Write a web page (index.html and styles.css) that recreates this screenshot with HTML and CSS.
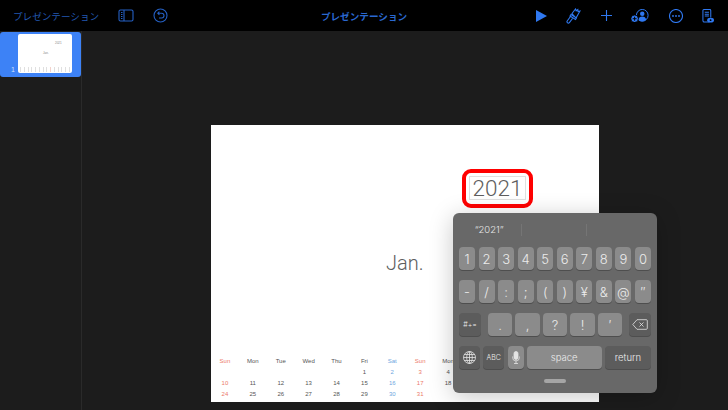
FILE: index.html
```html
<!DOCTYPE html>
<html lang="ja">

<head>
    <meta charset="UTF-8">
    <title>プレゼンテーション</title>
    <link rel="stylesheet" href="styles.css">
</head>

<body>
    <div class="topbar">
        <div class="top-left">
            <span class="back">プレゼンテーション</span>
            <svg class="icon dim" width="16" height="13" viewBox="0 0 16 13">
                <rect x="1" y="1" width="14" height="11" rx="1.500" />
                <path d="M6 1v11M3 3.500h1.500M3 5.500h1.500M3 7.500h1.500M3 9.500h1.500" />
            </svg>
            <svg class="icon dim" width="15" height="15" viewBox="0 0 15 15">
                <circle cx="7.500" cy="7.500" r="6.500" />
                <path d="M5 5.200h3.600a2.300 2.300 0 0 1 0 4.800H6M6.400 3.600 4.800 5.200l1.600 1.600" />
            </svg>
        </div>
        <div class="doc-title">プレゼンテーション</div>
        <div class="top-right">
            <svg class="icon" width="11" height="12" viewBox="0 0 11 12"><path class="fill" d="M0 0 11 6 0 12z" /></svg>
            <svg class="icon" width="15" height="16" viewBox="0 0 15 16">
                <path d="M6 5.500 9.500 1l.7 1.800L11.800 1.600 12 3.500l2-.5-4 7zM5 6.500l5.500 3.500-1 1.500L4 8zM4.500 8.500 1.200 13a1.400 1.400 0 0 0 2.200 1.700L6.500 10.500" />
            </svg>
            <svg class="icon" width="11" height="11" viewBox="0 0 11 11"><path d="M5.500 0v11M0 5.500h11" /></svg>
            <svg class="icon" width="18" height="13.500" viewBox="0 0 20 15">
                <circle cx="12.500" cy="7" r="6.500" />
                <circle cx="12.500" cy="5.200" r="2.500" class="fill" />
                <path class="fill" d="M8 12c.5-2.600 2.300-3.800 4.500-3.800s4 1.200 4.500 3.800a6.500 6.500 0 0 1-9 0z" />
                <circle cx="4" cy="10.800" r="4.200" class="ring" />
                <path class="cut" d="M4 8.600v4.400M1.800 10.800h4.400" />
            </svg>
            <svg class="icon" width="14" height="14" viewBox="0 0 14 14">
                <circle cx="7" cy="7" r="6.500" />
                <circle cx="4" cy="7" r=".9" class="fill" />
                <circle cx="7" cy="7" r=".9" class="fill" />
                <circle cx="10" cy="7" r=".9" class="fill" />
            </svg>
            <svg class="icon" width="12" height="14" viewBox="0 0 13 15">
                <path d="M8 14H2.500A1.500 1.500 0 0 1 1 12.500v-11A1 1 0 0 1 2 .5h6.500a1 1 0 0 1 1 1V9" />
                <path d="M3 3.500h4.500M3 5.500h4.500M3 7.500h4.500" />
                <ellipse cx="9.300" cy="12" rx="3.700" ry="2.500" class="fill" />
                <circle cx="9.300" cy="12" r="1" class="cut-dot" />
            </svg>
        </div>
    </div>

    <div class="main">
        <div class="sidebar">
            <div class="thumb-row">
                <span class="thumb-num">1</span>
                <div class="thumb">
                    <span class="thumb-year">2021</span>
                    <span class="thumb-month">Jan.</span>
                    <div class="thumb-cal" id="thumbCal"></div>
                </div>
            </div>
        </div>
        <div class="canvas">
            <div class="slide">
                <div class="year-box">2021</div>
                <div class="month">Jan.</div>
                <div class="calendar" id="calendar"></div>
            </div>
        </div>
    </div>

    <div class="highlight"></div>

    <div class="keyboard">
        <div class="suggest">
            <span class="suggest-item">“2021”</span>
            <span class="suggest-item"></span>
            <span class="suggest-item"></span>
        </div>
        <div class="key-row nums">
            <span class="key">1</span><span class="key">2</span><span class="key">3</span><span class="key">4</span><span class="key">5</span>
            <span class="key">6</span><span class="key">7</span><span class="key">8</span><span class="key">9</span><span class="key">0</span>
        </div>
        <div class="key-row nums">
            <span class="key">-</span><span class="key">/</span><span class="key">:</span><span class="key">;</span><span class="key">(</span>
            <span class="key">)</span><span class="key">¥</span><span class="key">&amp;</span><span class="key">@</span><span class="key">″</span>
        </div>
        <div class="key-row third">
            <span class="key dark small">#+=</span>
            <div class="punct">
                <span class="key">.</span><span class="key">,</span><span class="key">?</span><span class="key">!</span><span class="key">′</span>
            </div>
            <span class="key dark">
                <svg width="16" height="11" viewBox="0 0 16 11" class="kb-icon">
                    <path d="M5 .7h9.300a1 1 0 0 1 1 1v7.600a1 1 0 0 1-1 1H5L.8 5.500zM7.500 3.500l4 4M11.500 3.500l-4 4" />
                </svg>
            </span>
        </div>
        <div class="key-row fourth">
            <span class="key dark globe">
                <svg width="13" height="13" viewBox="0 0 13 13" class="kb-icon">
                    <circle cx="6.500" cy="6.500" r="6" />
                    <ellipse cx="6.500" cy="6.500" rx="2.800" ry="6" />
                    <path d="M6.500 .5v12M.5 6.500h12M1.300 3.500h10.400M1.300 9.500h10.400" />
                </svg>
            </span>
            <span class="key dark abc">ABC</span>
            <span class="key mic">
                <svg width="8" height="13" viewBox="0 0 8 13" class="kb-icon">
                    <rect x="2" y=".5" width="4" height="8" rx="2" class="kb-solid" />
                    <path d="M.6 5.500v1a3.400 3.400 0 0 0 6.800 0v-1M4 10v2.500M2 12.500h4" />
                </svg>
            </span>
            <span class="key space">space</span>
            <span class="key dark return">return</span>
        </div>
        <div class="handle"></div>
    </div>

    <script>
        // only the part of the month that is not under the keyboard
        let heads = ['Sun', 'Mon', 'Tue', 'Wed', 'Thu', 'Fri', 'Sat', 'Sun', 'Mon'];
        let days = ['', '', '', '', '', 1, 2, 3, 4,
            10, 11, 12, 13, 14, 15, 16, 17, 18,
            24, 25, 26, 27, 28, 29, 30, 31, ''];
        let calendar = document.getElementById('calendar');

        heads.concat(days).forEach((txt, i) => {
            let cell = document.createElement('span');
            cell.innerText = txt;
            if (i % 9 == 0 || i % 9 == 7) cell.className = 'sun';
            if (i % 9 == 6) cell.className = 'sat';
            calendar.appendChild(cell);
        });

        let thumbCal = document.getElementById('thumbCal');
        for (let i = 0; i < 14; i++) {
            let bar = document.createElement('i');
            if (i == 8) bar.className = 'sun';
            thumbCal.appendChild(bar);
        }
    </script>
</body>

</html>
```

FILE: styles.css
```css
* {
    box-sizing: border-box;
}

html,
body {
    margin: 0;
    height: 100%;
}

body {
    width: 728px;
    height: 410px;
    overflow: hidden;
    position: relative;
    background-color: #1c1c1c;
    font-family: "Liberation Sans", "Noto Sans CJK JP", sans-serif;
}

.topbar {
    height: 31px;
    background-color: #000;
    display: grid;
    grid-template-columns: 1fr auto 1fr;
    align-items: center;
}

.top-left {
    display: flex;
    align-items: center;
    gap: 19px;
    padding-left: 13px;
}

.back {
    font-size: 9.600px;
    color: #2258b0;
    white-space: nowrap;
    font-family: "Noto Sans CJK JP", sans-serif;
}

.doc-title {
    font-size: 9.600px;
    font-weight: 700;
    color: #2a68d0;
    font-family: "Noto Sans CJK JP", sans-serif;
}

.top-right {
    display: flex;
    align-items: center;
    justify-content: flex-end;
    gap: 19.500px;
    padding-right: 14px;
}

.icon {
    fill: none;
    stroke: #2f78f0;
    stroke-width: 1.100;
    display: block;
}

.icon.dim {
    stroke: #2560c4;
}

.icon .fill {
    fill: #2f78f0;
    stroke: none;
}

.icon .ring {
    fill: #2f78f0;
    stroke: #000;
    stroke-width: 1;
}

.icon .cut {
    stroke: #000;
}

.icon .cut-dot {
    fill: #000;
    stroke: none;
}

.main {
    display: flex;
    height: 379px;
}

.sidebar {
    width: 82px;
    padding-top: 1px;
    border-right: 1px solid #2a2a2a;
}

.thumb-row {
    width: 81px;
    height: 45px;
    background-color: #3d82f6;
    border-radius: 3px;
    padding: 2px 9px 0 18px;
    position: relative;
}

.thumb-num {
    position: absolute;
    left: 11px;
    top: 34px;
    font-size: 7px;
    color: #cfe0fb;
}

.thumb {
    position: relative;
    width: 54px;
    height: 39px;
    background-color: #fff;
    border-radius: 2px;
    overflow: hidden;
}

.thumb-year {
    position: absolute;
    left: 37px;
    top: 7px;
    font-size: 3px;
    color: #888;
}

.thumb-month {
    position: absolute;
    left: 25px;
    top: 17px;
    font-size: 3px;
    color: #888;
}

.thumb-cal {
    position: absolute;
    left: 2px;
    right: 2px;
    bottom: 1px;
    display: flex;
    justify-content: space-between;
}

.thumb-cal i {
    width: 1px;
    height: 5px;
    background-color: #e0e0e0;
}

.thumb-cal i.sun {
    background-color: #f4d2cb;
}

.canvas {
    flex: 1;
    padding: 94px 0 0 129px;
}

.slide {
    width: 388px;
    height: 277px;
    background-color: #fff;
    position: relative;
    overflow: hidden;
    font-family: Roboto, "Liberation Sans", sans-serif;
    font-weight: 300;
}

.year-box {
    position: absolute;
    left: 258px;
    top: 51px;
    width: 57px;
    height: 24px;
    border: 1px solid #e0e0e0;
    font-size: 22.500px;
    line-height: 23px;
    text-align: center;
    color: #5e5e5e;
}

.month {
    position: absolute;
    left: 175px;
    top: 126px;
    font-size: 20px;
    line-height: 24px;
    color: #5e5e5e;
}

.calendar {
    position: absolute;
    left: 0;
    top: 231px;
    display: grid;
    grid-template-columns: repeat(9, 27.900px);
    grid-auto-rows: 11px;
    font-family: "Liberation Sans", sans-serif;
    font-weight: 400;
    font-size: 6px;
    line-height: 11px;
    text-align: center;
    color: #555;
}

.calendar .sun {
    color: #ec7a6a;
}

.calendar .sat {
    color: #6ea6e0;
}

.highlight {
    position: absolute;
    left: 462px;
    top: 169px;
    width: 71px;
    height: 39px;
    border: 4px solid #f00;
    border-radius: 9px;
}

.keyboard {
    position: absolute;
    left: 453px;
    top: 213px;
    width: 204px;
    height: 180px;
    background-color: #686868;
    border-radius: 6px;
    box-shadow: 0 4px 24px rgba(0, 0, 0, 0.22);
    padding: 0 6px;
    font-family: Inter, "Liberation Sans", sans-serif;
    font-weight: 300;
    color: #ececec;
}

.suggest {
    display: flex;
    height: 34px;
    align-items: center;
}

.suggest-item {
    width: 65px;
    height: 12px;
    font-size: 9.500px;
    line-height: 12px;
    text-align: center;
    color: #e6e6e6;
    border-right: 1px solid #757575;
}

.suggest-item:first-child {
    width: 66px;
    margin-left: -2px;
}

.suggest-item:last-child {
    border-right: none;
}

.key-row {
    display: flex;
    justify-content: space-between;
    height: 23px;
    margin-bottom: 10px;
}

.key {
    height: 23px;
    border-radius: 4px;
    background-color: #8b8b8b;
    box-shadow: 0 1px 0 rgba(0, 0, 0, 0.25);
    display: flex;
    align-items: center;
    justify-content: center;
    font-size: 13px;
}

.nums .key {
    width: 16px;
}

.key.dark {
    background-color: #5c5c5c;
    width: 22px;
}

.key.small {
    font-size: 7px;
}

.punct {
    display: flex;
    gap: 3px;
}

.punct .key {
    width: 24.500px;
}

.fourth .key {
    font-size: 9.500px;
}

.fourth .abc {
    width: 21px;
    font-size: 7px;
}

.fourth .globe {
    width: 21px;
}

.fourth .mic {
    width: 16px;
}

.fourth .space {
    width: 75px;
}

.fourth .return {
    width: 46px;
}

.kb-icon {
    fill: none;
    stroke: #e4e4e4;
    stroke-width: .8;
}

.kb-icon .kb-solid {
    fill: #e4e4e4;
}

.handle {
    width: 22px;
    height: 3.500px;
    border-radius: 2px;
    background-color: #a5a5a5;
    margin: 0 auto;
}
```
